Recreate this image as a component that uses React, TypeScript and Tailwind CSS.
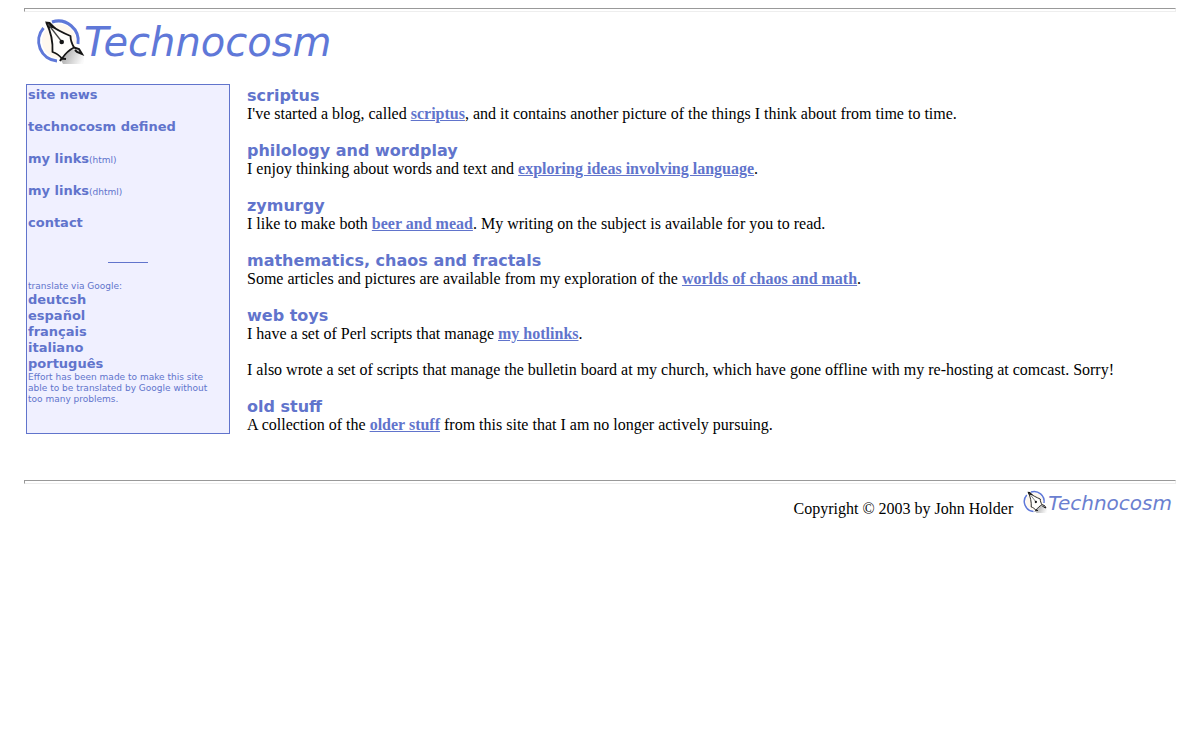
import { type ReactNode, useId } from "react";

const navItems = [
  { label: "site news", note: "" },
  { label: "technocosm defined", note: "" },
  { label: "my links", note: "(html)" },
  { label: "my links", note: "(dhtml)" },
  { label: "contact", note: "" }
];

const languages = ["deutcsh", "español", "français", "italiano", "português"];

function Rule() {
  return <hr className="h-1 border border-t-[#999] border-r-[#eee] border-b-[#eee] border-l-[#999]" />;
}

function PenMark({ className }: { className: string }) {
  const gripId = useId();

  return (
    <svg viewBox="0 0 56 54" className={className} aria-hidden="true">
      <defs>
        <linearGradient id={gripId} x1="0" y1="0.3" x2="1" y2="0.6">
          <stop offset="0" stopColor="#a3a3a3" />
          <stop offset="0.5" stopColor="#d0d0d0" />
          <stop offset="1" stopColor="#fafafa" />
        </linearGradient>
      </defs>
      <circle cx="27" cy="27" r="17" fill="#fff8ee" />
      <path d="M20 8 A20 20 0 0 1 46 30" fill="none" stroke="#5f78d8" strokeWidth="3" />
      <path d="M11.500 14 A20 20 0 0 0 25 47" fill="none" stroke="#5f78d8" strokeWidth="3" />
      <path d="M29 46 C32 39 38 35 44 35 L48 36 C52 40 53 45 51 50 H31 Z" fill={`url(#${gripId})`} />
      <path
        d="M14.500 9 C22 14 31 19 38.500 22 C38.500 26 40 30 42 33.500 C37 36 33 40 30 44.500 C27 41 24 39 20.500 38 C21 28 19 18 14.500 9 Z"
        fill="#fffefb"
        stroke="#151515"
        strokeWidth="1.800"
        strokeLinejoin="round"
      />
      <path d="M13 7.500 L18 8 L24 14 L17 14 Z" fill="#151515" />
      <path d="M16 10 L30 28" fill="none" stroke="#444" strokeWidth="1.300" />
      <circle cx="29.700" cy="28" r="2.300" fill="#151515" />
      <path d="M28 47 L29.500 44.500 L34 45 M42 33.500 L47 35 L50 40 L45 38 L43 36" fill="none" stroke="#151515" strokeWidth="2" />
    </svg>
  );
}

function Section({ title, children }: { title: string; children: ReactNode }) {
  return (
    <section className="mb-[18px]">
      <h2 className="font-['DejaVu_Sans',sans-serif] text-[16px] leading-[19px] font-bold text-[#6174cc]">{title}</h2>
      {children}
    </section>
  );
}

function TextLink({ children }: { children: ReactNode }) {
  return (
    <a href="#" className="font-bold text-[#6174cc] underline">
      {children}
    </a>
  );
}

export default function App() {
  return (
    <div className="bg-white px-6 pt-2 font-['Liberation_Serif',serif] text-[16px] leading-[18px] text-black">
      <Rule />
      <header className="flex h-[72px] items-start pt-0.5 pl-2">
        <PenMark className="h-[54px] w-14 shrink-0" />
        <h1 className="-ml-1 font-['DejaVu_Sans',sans-serif] text-[40px] leading-[56px] text-[#5f78d8] italic">Technocosm</h1>
      </header>

      <div className="flex items-start gap-[17px] pl-0.5">
        <aside className="w-[204px] shrink-0 border border-[#6174cc] bg-[#f0f0ff] px-px pt-0.5 pb-7 font-['DejaVu_Sans',sans-serif] text-[9px] leading-[11px] text-[#6174cc]">
          <nav className="flex flex-col gap-4">
            {navItems.map((item) => (
              <div key={item.label + item.note} className="h-4 leading-4">
                <a href="#" className="text-[13px] font-bold">
                  {item.label}
                </a>
                {item.note}
              </div>
            ))}
          </nav>
          <hr className="mx-auto mt-[31px] mb-[18px] w-10 border-[#6174cc]" />
          <p>translate via Google:</p>
          <ul className="text-[13px] leading-4 font-bold">
            {languages.map((language) => (
              <li key={language}>
                <a href="#">{language}</a>
              </li>
            ))}
          </ul>
          <p className="pr-2">Effort has been made to make this site able to be translated by Google without too many problems.</p>
        </aside>

        <main className="min-w-0 flex-1 pt-0.5">
          <Section title="scriptus">
            <p>
              I've started a blog, called <TextLink>scriptus</TextLink>, and it contains another picture of the things I think about from time to time.
            </p>
          </Section>
          <Section title="philology and wordplay">
            <p>
              I enjoy thinking about words and text and <TextLink>exploring ideas involving language</TextLink>.
            </p>
          </Section>
          <Section title="zymurgy">
            <p>
              I like to make both <TextLink>beer and mead</TextLink>. My writing on the subject is available for you to read.
            </p>
          </Section>
          <Section title="mathematics, chaos and fractals">
            <p>
              Some articles and pictures are available from my exploration of the <TextLink>worlds of chaos and math</TextLink>.
            </p>
          </Section>
          <Section title="web toys">
            <p>
              I have a set of Perl scripts that manage <TextLink>my hotlinks</TextLink>.
            </p>
            <p className="mt-[18px]">
              I also wrote a set of scripts that manage the bulletin board at my church, which have gone offline with my re-hosting at comcast. Sorry!
            </p>
          </Section>
          <Section title="old stuff">
            <p>
              A collection of the <TextLink>older stuff</TextLink> from this site that I am no longer actively pursuing.
            </p>
          </Section>
        </main>
      </div>

      <footer className="mt-7">
        <Rule />
        <div className="flex items-start justify-end pt-1 pr-1">
          <p className="mt-3 mr-2">Copyright © 2003 by John Holder</p>
          <a href="#" className="flex items-start text-[#6b80d0]" aria-label="Technocosm">
            <PenMark className="h-[27px] w-7" />
            <span className="-ml-px font-['DejaVu_Sans',sans-serif] text-[20px] leading-[30px] italic">Technocosm</span>
          </a>
        </div>
      </footer>
    </div>
  );
}
